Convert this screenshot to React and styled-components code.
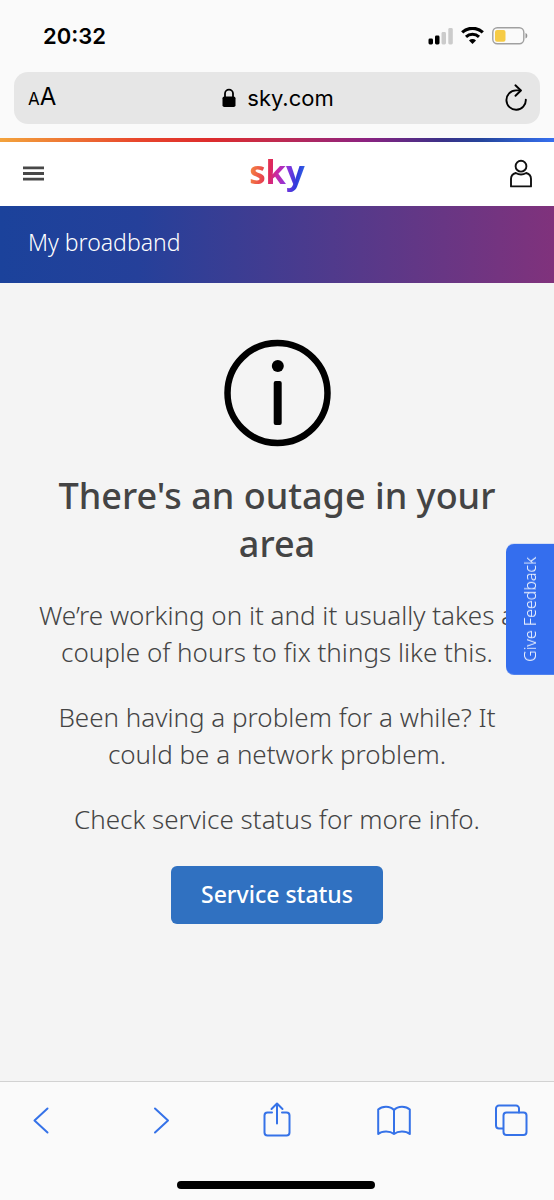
import styled, { createGlobalStyle } from 'styled-components';

const GlobalStyle = createGlobalStyle`
  * {
    box-sizing: border-box;
  }

  body {
    margin: 0;
    background: #f4f4f4;
    font-family: "Noto Sans", "Open Sans", sans-serif;
    color: #444;
  }

  button {
    padding: 0;
    border: 0;
    background: none;
    color: inherit;
    font: inherit;
    cursor: pointer;
  }

  svg {
    display: block;
  }
`;

const Page = styled.div`
  display: flex;
  flex-direction: column;
  min-height: 100vh;
`;

const BrowserTop = styled.div`
  padding: 0 14px 14px;
  background: #fafafa;
  color: #000;
  font-family: Inter, "Liberation Sans", sans-serif;
`;

const StatusBar = styled.div`
  display: flex;
  align-items: center;
  justify-content: space-between;
  height: 72px;
  padding: 0 12px 0 29px;
`;

const Clock = styled.time`
  font-size: 22px;
  font-weight: 600;
  line-height: 28px;
`;

const StatusIcons = styled.div`
  display: flex;
  align-items: center;
  gap: 8px;
`;

const AddressBar = styled.div`
  display: grid;
  grid-template-columns: 1fr auto 1fr;
  align-items: center;
  height: 52px;
  padding: 0 12px 0 14px;
  border-radius: 14px;
  background: #e6e6e6;
`;

const TextSize = styled.button`
  justify-self: start;
  font-size: 24px;
  line-height: 28px;

  small {
    font-size: 17px;
  }
`;

const Address = styled.div`
  display: flex;
  align-items: center;
  gap: 11px;
  font-size: 22px;
  line-height: 28px;
`;

const Reload = styled.button`
  justify-self: end;
`;

const BrandLine = styled.div`
  height: 4px;
  background: linear-gradient(
    90deg,
    #f3a33c 0%,
    #e8462c 25%,
    #dd2c2c 38%,
    #c02a50 50%,
    #8c2280 66%,
    #3a3188 80%,
    #25459c 87%,
    #3670f0 100%
  );
`;

const SiteHeader = styled.header`
  display: grid;
  grid-template-columns: 1fr auto 1fr;
  align-items: center;
  height: 64px;
  padding: 0 21px;
  background: #fff;
`;

const HeaderButton = styled.button`
  justify-self: ${({ $end }) => ($end ? 'end' : 'start')};
`;

const Logo = styled.a`
  padding-bottom: 4px;
  background: linear-gradient(
    100deg,
    #f69a3c 0%,
    #ee5a48 22%,
    #df2858 38%,
    #c829a8 50%,
    #8a35dc 66%,
    #2f3bdc 82%,
    #338eec 100%
  );
  background-clip: text;
  color: transparent;
  font-family: "Open Sans", sans-serif;
  font-size: 33px;
  font-weight: 700;
  line-height: 46px;
  text-decoration: none;
`;

const Banner = styled.div`
  padding: 18px 28px 22px;
  background: linear-gradient(90deg, #1b429b 0%, #25409a 25%, #503a8c 60%, #80327c 100%);
  color: #fff;
  font-size: 23px;
  font-weight: 300;
  line-height: 37px;
`;

const Main = styled.main`
  display: flex;
  flex: 1;
  flex-direction: column;
  align-items: center;
  padding: 56px 34px 40px;
  text-align: center;
`;

const Title = styled.h1`
  margin: 25px 0 29px;
  font-size: 36px;
  font-weight: 500;
  line-height: 48px;
`;

const Text = styled.p`
  max-width: 490px;
  margin: 0 0 28px;
  font-size: 26px;
  font-weight: 300;
  line-height: 37px;
`;

const StatusLink = styled.a`
  padding: 10px 30px 11px;
  border-radius: 6px;
  background: #3071c1;
  color: #fff;
  font-size: 23px;
  font-weight: 500;
  line-height: 37px;
  text-decoration: none;
`;

const Feedback = styled.button`
  && {
    position: fixed;
    top: 544px;
    right: 0;
    padding: 13px;
    border-radius: 0 8px 8px 0;
    background: #346eee;
    color: #fff;
    font-size: 16px;
    font-weight: 300;
    line-height: 22px;
    writing-mode: vertical-rl;
    transform: rotate(180deg);
  }
`;

const BrowserBottom = styled.footer`
  padding: 19px 26px 11px 24px;
  border-top: 1px solid #d2d2d2;
  background: #fafafa;
`;

const Tools = styled.nav`
  display: flex;
  justify-content: space-between;
  color: #3572e8;
`;

const HomeIndicator = styled.div`
  width: 36%;
  min-width: 198px;
  height: 8px;
  margin: 42px auto 0;
  border-radius: 4px;
  background: #000;
`;

const Signal = () => (
  <svg width="26" height="18" viewBox="0 0 26 18" aria-hidden="true">
    <rect x="1.5" y="11.5" width="4.5" height="6" rx="1.4" />
    <rect x="8" y="8.5" width="4.5" height="9" rx="1.4" />
    <rect x="14.5" y="5" width="4.5" height="12.5" rx="1.4" fill="#cbcbcb" />
    <rect x="21.3" y="1" width="4.5" height="16.5" rx="1.4" fill="#cbcbcb" />
  </svg>
);

const Wifi = () => (
  <svg width="23" height="18" viewBox="0 0 23 18" fill="none" stroke="#000" aria-hidden="true">
    <path d="M1.2 5.4a15 15 0 0 1 20.6 0" strokeWidth="3.2" />
    <path d="M5 9.9a9.4 9.4 0 0 1 13 0" strokeWidth="3" />
    <path d="M8 13.4a5 5 0 0 1 7 0l-3.5 3.7z" fill="#000" stroke="none" />
  </svg>
);

const Battery = () => (
  <svg width="36" height="18" viewBox="0 0 36 18" aria-hidden="true">
    <rect x="0.8" y="0.8" width="31" height="16" rx="4.5" fill="none" stroke="#a0a0a0" strokeWidth="1.4" />
    <rect x="3" y="3" width="10.5" height="11.8" rx="2" fill="#f6cb46" />
    <path d="M33.5 6c2.4.7 2.4 4.8 0 5.5z" fill="#929292" />
  </svg>
);

const Lock = () => (
  <svg width="14" height="20" viewBox="0 0 14 20" aria-hidden="true">
    <path d="M3 9V5.6a4 4 0 0 1 8 0V9" fill="none" stroke="#000" strokeWidth="1.8" />
    <rect x="0.5" y="8.5" width="13" height="10.5" rx="1.8" />
  </svg>
);

const ReloadIcon = () => (
  <svg width="24" height="28" viewBox="0 0 24 28" fill="none" stroke="#000" strokeWidth="1.9" strokeLinecap="round" strokeLinejoin="round">
    <path d="M16.4 6.4H12A9.7 9.7 0 1 0 21.8 15.6" />
    <path d="M11.4 1.3l5.5 5.2-5.4 5.3" />
  </svg>
);

const MenuIcon = () => (
  <svg width="24" height="20" viewBox="0 0 24 20" fill="none" stroke="#484848" strokeWidth="2.8">
    <path d="M2 3.8h21M2 9.5h21M2 15.2h21" />
  </svg>
);

const AccountIcon = () => (
  <svg width="24" height="30" viewBox="0 0 24 30" fill="none" stroke="#111" strokeWidth="1.9" strokeLinejoin="round">
    <circle cx="12" cy="7.2" r="5.4" />
    <path d="M6.8 14C4 14.7 2 17 2 20v7.4h20V20c0-3-2-5.3-4.8-6-3 1.800-7.400 1.800-10.400 0z" />
  </svg>
);

const InfoIcon = () => (
  <svg width="108" height="108" viewBox="0 0 108 108" aria-hidden="true">
    <circle cx="54.5" cy="54" r="50" fill="none" stroke="#000" strokeWidth="6.5" />
    <circle cx="54.8" cy="27" r="6" />
    <rect x="50.7" y="42" width="8" height="44" rx="2" />
  </svg>
);

const ToolIcon = ({ children }) => (
  <svg width="34" height="38" viewBox="0 0 34 38" fill="none" stroke="currentColor" strokeWidth="2" strokeLinecap="round" strokeLinejoin="round">
    {children}
  </svg>
);

const tools = [
  { label: 'Back', icon: <path d="M23.5 7.5L10.5 19.5l13 12" /> },
  { label: 'Forward', icon: <path d="M13 7.5l13 12-13 12" /> },
  {
    label: 'Share',
    icon: (
      <>
        <path d="M13 11.5H8.500a3 3 0 0 0-3 3v17a3 3 0 0 0 3 3h19a3 3 0 0 0 3-3v-17a3 3 0 0 0-3-3H23" />
        <path d="M18 22.500V2.500M12.500 8L18 2.500 23.500 8" />
      </>
    ),
  },
  {
    label: 'Bookmarks',
    icon: (
      <path d="M17 9C13 4.500 5 4.800 1.200 8.500v24.500C5 29.700 13 29.700 17 33c4-3.300 12-3.300 15.800 0V8.500C29 4.800 21 4.500 17 9zM17 9v24" />
    ),
  },
  {
    label: 'Tabs',
    icon: (
      <>
        <path d="M9 27.500H5a3 3 0 0 1-3-3v-17a3 3 0 0 1 3-3h17a3 3 0 0 1 3 3v4" />
        <rect x="9.500" y="11.500" width="23" height="22.500" rx="3" />
      </>
    ),
  },
];

const App = () => {
  return (
    <>
      <GlobalStyle />
      <Page>
        <BrowserTop>
          <StatusBar>
            <Clock>20:32</Clock>
            <StatusIcons>
              <Signal />
              <Wifi />
              <Battery />
            </StatusIcons>
          </StatusBar>
          <AddressBar>
            <TextSize type="button" aria-label="Text size">
              <small>A</small>A
            </TextSize>
            <Address>
              <Lock />
              sky.com
            </Address>
            <Reload type="button" aria-label="Reload">
              <ReloadIcon />
            </Reload>
          </AddressBar>
        </BrowserTop>
        <BrandLine />
        <SiteHeader>
          <HeaderButton type="button" aria-label="Menu">
            <MenuIcon />
          </HeaderButton>
          <Logo href="#">sky</Logo>
          <HeaderButton type="button" aria-label="Account" $end>
            <AccountIcon />
          </HeaderButton>
        </SiteHeader>
        <Banner>My broadband</Banner>
        <Main>
          <InfoIcon />
          <Title>There's an outage in your area</Title>
          <Text>We’re working on it and it usually takes a couple of hours to fix things like this.</Text>
          <Text>Been having a problem for a while? It could be a network problem.</Text>
          <Text>Check service status for more info.</Text>
          <StatusLink href="#">Service status</StatusLink>
        </Main>
        <BrowserBottom>
          <Tools aria-label="Browser">
            {tools.map(({ label, icon }) => (
              <button key={label} type="button" aria-label={label}>
                <ToolIcon>{icon}</ToolIcon>
              </button>
            ))}
          </Tools>
          <HomeIndicator />
        </BrowserBottom>
      </Page>
      <Feedback type="button">Give Feedback</Feedback>
    </>
  );
};

export default App;
